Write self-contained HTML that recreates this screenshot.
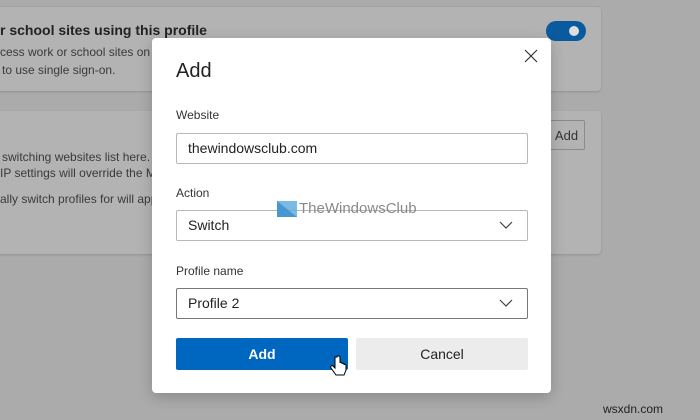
<!DOCTYPE html>
<html><head><style>
body{margin:0;width:700px;height:420px;background:#ababab;position:relative;overflow:hidden;font-family:"Liberation Sans",sans-serif;color:#1a1a1a}
.a{position:absolute}
.card{background:#b3b3b3;border-radius:4px;box-shadow:0 1px 2px rgba(0,0,0,.15)}
.t{font-size:12px;color:#3a3a3a;white-space:nowrap}
.lbl{font-size:12px;color:#333}
.inp{border:1px solid #b8b8b8;border-radius:2px;font-size:14px;box-sizing:border-box;padding-left:11px;line-height:29px;color:#222}
.chev{position:absolute;right:14px;top:10px}
</style></head><body>
<div class="a" style="left:0;top:6px;width:601px;height:1px;background:#a2a2a2"></div>
<div class="a card" style="left:-10px;top:7px;width:611px;height:84px"></div>
<div class="a card" style="left:-10px;top:111px;width:611px;height:143px"></div>
<div class="a" style="left:0;top:22px;font-size:14px;font-weight:bold;color:#222;white-space:nowrap">r school sites using this profile</div>
<div class="a t" style="left:0;top:45px">cess work or school sites on t</div>
<div class="a t" style="left:2px;top:63px">to use single sign-on.</div>
<div class="a t" style="left:2px;top:150px">switching websites list here.</div>
<div class="a t" style="left:0;top:166px">IP settings will override the M</div>
<div class="a t" style="left:0;top:192px">ally switch profiles for will app</div>
<div class="a" style="left:546px;top:21px;width:40px;height:20px;border-radius:10px;background:#0a5aa0"></div>
<div class="a" style="left:569px;top:26px;width:10px;height:10px;border-radius:5px;background:#ddd"></div>
<div class="a" style="left:548px;top:120px;width:37px;height:30px;border:1px solid #8a8a8a;border-radius:2px;font-size:13px;line-height:29px;text-align:center;color:#333;box-sizing:border-box">Add</div>

<div class="a" style="left:152px;top:38px;width:399px;height:355px;background:#fff;border-radius:4px;box-shadow:0 4px 14px rgba(0,0,0,.2)"></div>
<svg class="a" style="left:524px;top:49px" width="14" height="14"><path d="M1 1L13 13M13 1L1 13" stroke="#333" stroke-width="1.2"/></svg>
<div class="a" style="left:176px;top:60px;font-size:20px;color:#222">Add</div>
<div class="a lbl" style="left:176px;top:108px">Website</div>
<div class="a inp" style="left:176px;top:133px;width:352px;height:31px">thewindowsclub.com</div>
<div class="a lbl" style="left:176px;top:186px">Action</div>
<div class="a inp" style="left:176px;top:210px;width:352px;height:31px">Switch<svg class="chev" width="14" height="9"><path d="M1 1L7 7L13 1" stroke="#444" fill="none" stroke-width="1.2"/></svg></div>
<div class="a lbl" style="left:176px;top:264px">Profile name</div>
<div class="a inp" style="left:176px;top:288px;width:352px;height:31px;border:1px solid #777">Profile 2<svg class="chev" width="14" height="9"><path d="M1 1L7 7L13 1" stroke="#444" fill="none" stroke-width="1.2"/></svg></div>
<div class="a" style="left:176px;top:338px;width:172px;height:32px;background:#0067c0;border-radius:2px;color:#fff;font-weight:bold;font-size:14px;text-align:center;line-height:32px">Add</div>
<div class="a" style="left:356px;top:338px;width:172px;height:32px;background:#ececec;border-radius:2px;color:#222;font-size:14px;text-align:center;line-height:32px">Cancel</div>
<svg class="a" style="left:330px;top:355px" width="18" height="24"><path d="M5 2v11l-2-2c-1-1-3 0-2 2l5 7h8l2-5v-5c0-1-2-1-2 0v-1c0-1-2-1-2 0v-1c0-1-2-1-2 0V2c0-1.5-3-1.5-3 0z" fill="#fff" stroke="#000" stroke-width="1"/></svg>

<svg class="a" style="left:277px;top:201px" width="20" height="16"><path d="M0 0h20v16h-20z" fill="#5aa9dd" opacity=".8"/><path d="M0 0l20 16H0z" fill="#3b8fd0" opacity=".8"/></svg>
<div class="a" style="left:299px;top:200px;font-size:15px;color:#8a8a8a;white-space:nowrap">TheWindowsClub</div>
<div class="a" style="left:603px;top:402px;font-size:12px;color:#222">wsxdn.com</div>
</body></html>
